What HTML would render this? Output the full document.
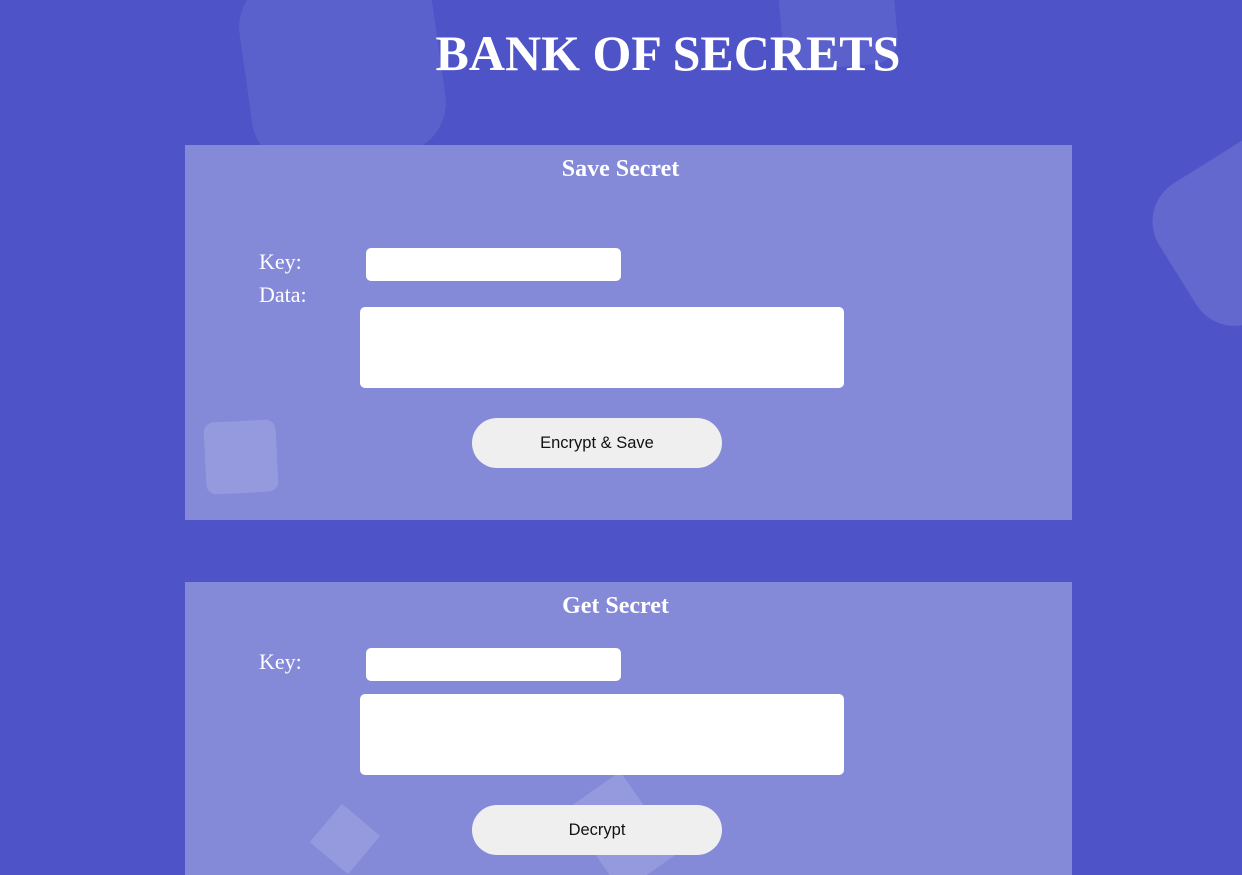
<!DOCTYPE html>
<html style="height:875px;overflow:hidden"><head><style>
body{margin:0;width:1242px;height:875px;overflow:hidden;background:#4e54c8;position:relative;font-family:"Liberation Serif",serif;color:#fff}
.s{position:absolute;background:rgba(255,255,255,0.08);border-radius:40px}
.p{position:absolute;left:185px;width:887px;background:#8489d8}
h1{position:absolute;left:0;width:1336px;text-align:center;top:24px;margin:0;font-size:50px;font-weight:bold}
h2{position:absolute;margin:0;font-size:24px;font-weight:bold;width:100%;text-align:center}
.l{position:absolute;font-size:22px}
.i{position:absolute;background:#fff;border-radius:5px}
.b{position:absolute;left:287px;width:250px;height:50px;border-radius:25px;background:#efefef;color:#111;font:16.5px "Liberation Sans",sans-serif;text-align:center;line-height:50px}
.g{position:absolute;background:rgba(255,255,255,0.14);border-radius:10px}
</style></head><body>
<div class="s" style="left:245px;top:-30px;width:195px;height:190px;transform:rotate(-8deg);border-radius:50px"></div>
<div class="s" style="left:780px;top:-45px;width:115px;height:112px;transform:rotate(-5deg);border-radius:25px"></div>
<div class="s" style="left:1165px;top:150px;width:170px;height:160px;transform:rotate(-32deg);border-radius:45px;background:rgba(255,255,255,0.12)"></div>
<h1>BANK OF SECRETS</h1>
<div class="p" style="top:145px;height:375px">
<h2 style="top:11px;left:-8px">Save Secret</h2>
<div class="g" style="left:20px;top:276px;width:72px;height:72px;transform:rotate(-3deg)"></div>
<div class="l" style="left:74px;top:104px">Key:</div>
<div class="l" style="left:74px;top:137px">Data:</div>
<div class="i" style="left:181px;top:103px;width:255px;height:33px"></div>
<div class="i" style="left:175px;top:162px;width:484px;height:81px"></div>
<div class="b" style="top:273px">Encrypt &amp; Save</div>
</div>
<div class="p" style="top:582px;height:293px;overflow:hidden">
<div class="g" style="left:135px;top:232px;width:50px;height:50px;transform:rotate(40deg);border-radius:0"></div>
<div class="g" style="left:402px;top:200px;width:68px;height:100px;transform:rotate(-35deg);border-radius:0"></div>
<h2 style="top:11px;left:-13px">Get Secret</h2>
<div class="l" style="left:74px;top:67px">Key:</div>
<div class="i" style="left:181px;top:66px;width:255px;height:33px"></div>
<div class="i" style="left:175px;top:112px;width:484px;height:81px"></div>
<div class="b" style="top:223px">Decrypt</div>
</div>
</body></html>
